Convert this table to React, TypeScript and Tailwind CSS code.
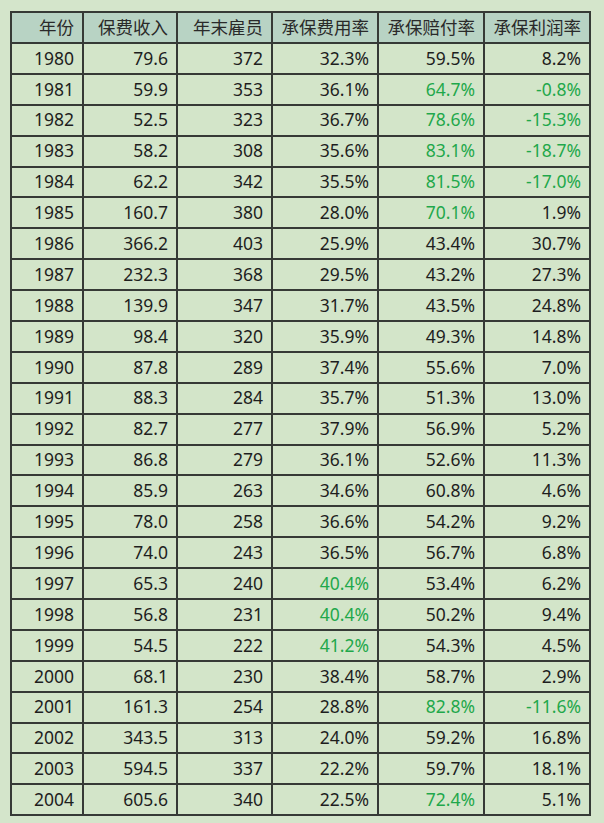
const headers = ["年份", "保费收入", "年末雇员", "承保费用率", "承保赔付率", "承保利润率"];

// [year, premium, staff, expense, loss, profit]
type Row = [string, string, string, string, string, string];

const rows: Row[] = [
  ["1980", "79.6", "372", "32.3%", "59.5%", "8.2%"],
  ["1981", "59.9", "353", "36.1%", "64.7%", "-0.8%"],
  ["1982", "52.5", "323", "36.7%", "78.6%", "-15.3%"],
  ["1983", "58.2", "308", "35.6%", "83.1%", "-18.7%"],
  ["1984", "62.2", "342", "35.5%", "81.5%", "-17.0%"],
  ["1985", "160.7", "380", "28.0%", "70.1%", "1.9%"],
  ["1986", "366.2", "403", "25.9%", "43.4%", "30.7%"],
  ["1987", "232.3", "368", "29.5%", "43.2%", "27.3%"],
  ["1988", "139.9", "347", "31.7%", "43.5%", "24.8%"],
  ["1989", "98.4", "320", "35.9%", "49.3%", "14.8%"],
  ["1990", "87.8", "289", "37.4%", "55.6%", "7.0%"],
  ["1991", "88.3", "284", "35.7%", "51.3%", "13.0%"],
  ["1992", "82.7", "277", "37.9%", "56.9%", "5.2%"],
  ["1993", "86.8", "279", "36.1%", "52.6%", "11.3%"],
  ["1994", "85.9", "263", "34.6%", "60.8%", "4.6%"],
  ["1995", "78.0", "258", "36.6%", "54.2%", "9.2%"],
  ["1996", "74.0", "243", "36.5%", "56.7%", "6.8%"],
  ["1997", "65.3", "240", "40.4%", "53.4%", "6.2%"],
  ["1998", "56.8", "231", "40.4%", "50.2%", "9.4%"],
  ["1999", "54.5", "222", "41.2%", "54.3%", "4.5%"],
  ["2000", "68.1", "230", "38.4%", "58.7%", "2.9%"],
  ["2001", "161.3", "254", "28.8%", "82.8%", "-11.6%"],
  ["2002", "343.5", "313", "24.0%", "59.2%", "16.8%"],
  ["2003", "594.5", "337", "22.2%", "59.7%", "18.1%"],
  ["2004", "605.6", "340", "22.5%", "72.4%", "5.1%"],
];

// expense >= 40%, loss above ~64%, profit < 0 are shown in green
function isGreen(col: number, value: string) {
  const n = parseFloat(value);
  if (col === 3) return n >= 40;
  if (col === 4) return n >= 64;
  if (col === 5) return n < 0;
  return false;
}

export default function App() {
  return (
    <div
      className="min-h-[823px] w-[604px] bg-[#d4e5cb] pl-[10px] pt-[11px] text-[17.5px] text-[#1e1e1e]"
      style={{ fontFamily: '"Noto Sans", "Noto Sans CJK SC", sans-serif' }}>
      <div className="grid w-[581px] grid-cols-[70px_92px_93px_104px_104px_104px] gap-[2px] border-2 border-[#363a36] bg-[#363a36]">
        {headers.map((h) => (
          <div
            key={h}
            className="flex h-[29px] items-center justify-end bg-[#b8d3c4] pr-[8px] leading-none text-[#2a2a2a]">
            {h}
          </div>
        ))}
        {rows.map((row) =>
          row.map((cell, i) => (
            <div
              key={row[0] + i}
              className={
                "flex h-[28.9px] items-center justify-end bg-[#d3e5c9] pr-[8px] leading-none " +
                (isGreen(i, cell) ? "text-[#1fa84b]" : "")
              }>
              {cell}
            </div>
          ))
        )}
      </div>
    </div>
  );
}
